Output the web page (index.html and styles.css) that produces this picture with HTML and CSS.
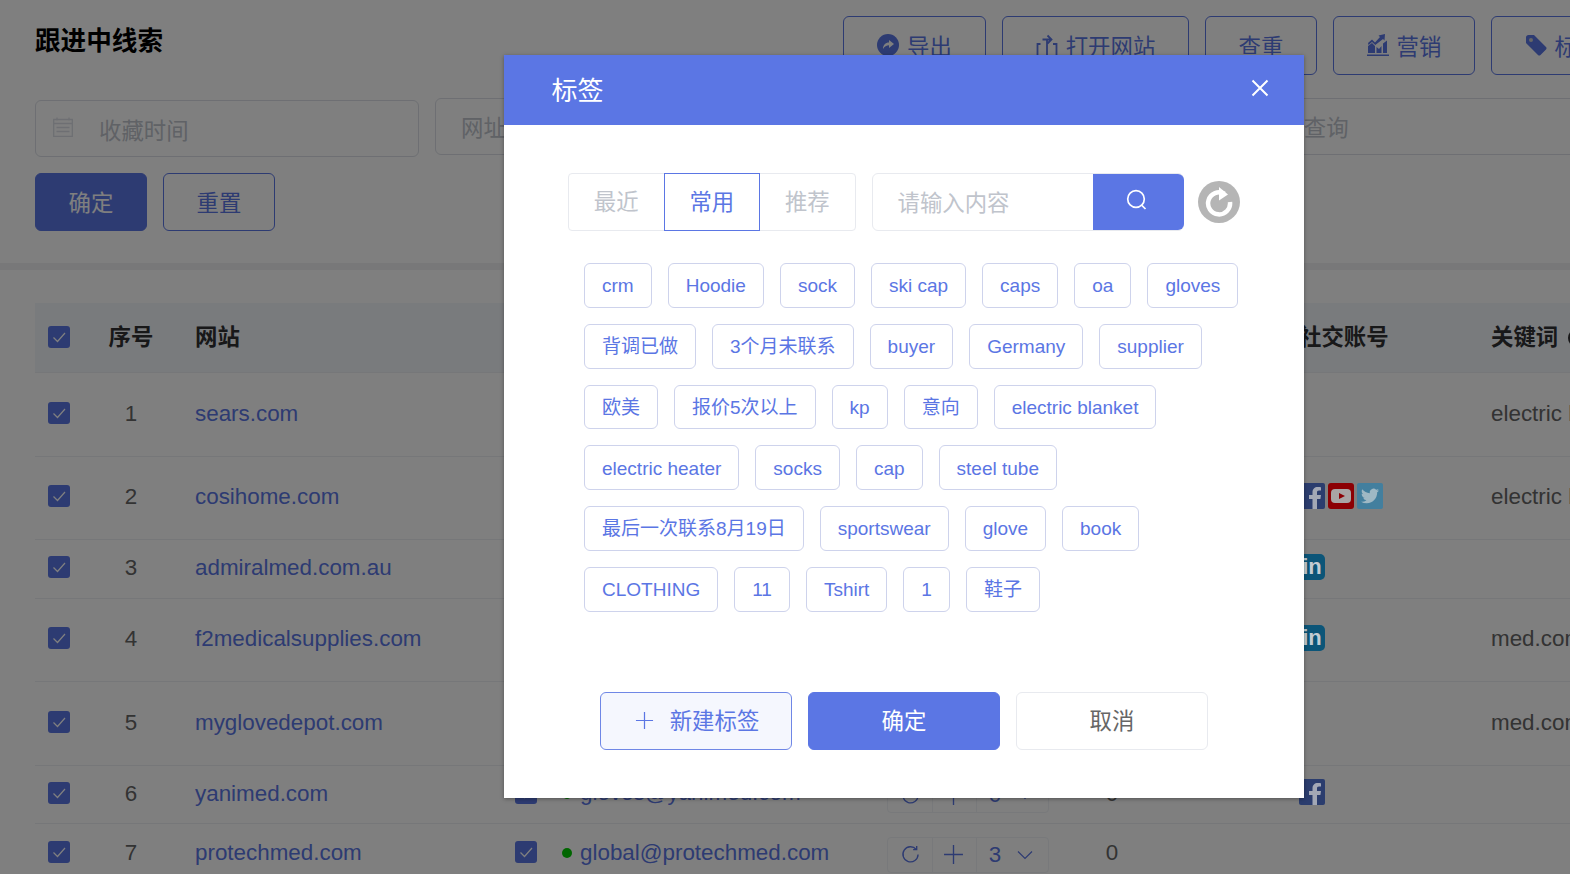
FILE: index.html
```html
<!DOCTYPE html>
<html lang="zh-CN">
<head>
<meta charset="utf-8">
<title>跟进中线索</title>
<link rel="stylesheet" href="styles.css">
</head>
<body>
<svg class="sprite" width="0" height="0" aria-hidden="true">
  <symbol id="i-check" viewBox="0 0 22 22"><path d="M5.500 11.500l4 4 7.500-8.500" fill="none" stroke="#fff" stroke-width="1.200"/></symbol>
  <symbol id="i-fb" viewBox="0 0 26 26"><rect width="26" height="26" rx="2" fill="#2b3d6e"/><path d="M18 26V16h3.400l.6-4h-4V9.600c0-1.200.4-2 2-2H22V4.200c-.4 0-1.700-.2-3.200-.2-3.200 0-5.300 1.900-5.300 5.400V12H10v4h3.500v10z" fill="#a3a8b5"/></symbol>
  <symbol id="i-yt" viewBox="0 0 26 26"><rect width="26" height="26" rx="3" fill="#8c0004"/><rect x="3" y="6" width="20" height="14" rx="4" fill="#a9a5a5"/><path d="M11 10l6 3-6 3z" fill="#8c0004"/></symbol>
  <symbol id="i-tw" viewBox="0 0 26 26"><rect width="26" height="26" rx="2" fill="#437f9e"/><path transform="translate(4 4) scale(.75)" d="M23.950 4.570a10 10 0 0 1-2.820.770 4.960 4.960 0 0 0 2.160-2.720c-.950.550-2 .960-3.120 1.190a4.920 4.920 0 0 0-8.380 4.480C7.690 8.100 4.070 6.130 1.640 3.160a4.820 4.820 0 0 0-.670 2.480c0 1.710.870 3.210 2.190 4.100a4.900 4.900 0 0 1-2.230-.620v.060a4.920 4.920 0 0 0 3.950 4.830 5 5 0 0 1-2.210.080 4.940 4.940 0 0 0 4.600 3.420A9.870 9.870 0 0 1 0 19.540a14 14 0 0 0 7.560 2.210c9.050 0 14-7.500 14-13.980 0-.210 0-.420-.020-.630a9.940 9.940 0 0 0 2.460-2.550z" fill="#9fb8c4"/></symbol>
  <symbol id="i-redo" viewBox="0 0 20 20"><path d="M15.500 5.200A7.200 7.200 0 1 0 17.200 10" fill="none" stroke="currentColor" stroke-width="1.300"/><path d="M12.500 5.400h3.400V2" fill="none" stroke="currentColor" stroke-width="1.300"/></symbol>
  <symbol id="i-plus" viewBox="0 0 20 20"><path d="M10 1v18M1 10h18" fill="none" stroke="currentColor" stroke-width="1.300"/></symbol>
  <symbol id="i-down" viewBox="0 0 16 10"><path d="M1 1.500l7 7 7-7" fill="none" stroke="currentColor" stroke-width="1.200"/></symbol>
</svg>

<div class="page">
  <header class="page-head">
    <h1 class="page-title">跟进中线索</h1>
    <div class="toolbar">
      <button class="tool-btn tb-export">
        <svg class="tool-icon" viewBox="0 0 22 22"><circle cx="11" cy="11" r="11" fill="#5b76e4"/><path d="M6 15c0-4 2.500-6.500 6-6.500V6l5 4-5 4v-2.700c-2.500 0-4.500 1.200-6 3.700z" fill="#fff"/></svg>
        <span>导出</span>
      </button>
      <button class="tool-btn tb-open">
        <svg class="tool-icon" viewBox="0 0 22 22"><path d="M1.500 21V10h3M17 10h3.500v11M11 21V5.500M6.500 5.500H15M11.500 1.500l4 4-4 4" fill="none" stroke="#5b76e4" stroke-width="1.800"/></svg>
        <span>打开网站</span>
      </button>
      <button class="tool-btn tb-dedupe"><span>查重</span></button>
      <button class="tool-btn tb-market">
        <svg class="tool-icon" viewBox="0 0 22 22"><path d="M0 20.500h22v1.500H0zM1 19v-7l4-3 3 3v7zM9.500 19v-6l2.500 2 2.500-3v7zM16 19V9.500l4-3V19zM1 9l4-3.500 3 3 5-5.500-1.500-1.500L18 0l-.5 6.500L16 5 8.300 11 5 8l-3.500 3z" fill="#5b76e4"/></svg>
        <span>营销</span>
      </button>
      <button class="tool-btn tb-market">
        <svg class="tool-icon" viewBox="0 0 22 22"><path d="M1 3.500C1 2 2 1 3.500 1H9l12 12c.700.700.700 1.800 0 2.500L15.500 21c-.700.700-1.800.700-2.500 0L1 9z" fill="#5b76e4"/><circle cx="6" cy="6" r="2" fill="#ccc"/></svg>
        <span>标签</span>
      </button>
    </div>
  </header>

  <section class="filters">
    <div class="filter-row">
      <div class="field field-date">
        <svg class="field-icon" viewBox="0 0 20 20"><path d="M.7 2.500h18.600v16.800H.7zM.7 6.500h18.600M4 .5v3M16 .5v3M3.500 10.500h13M3.500 14.500h13" fill="none" stroke="#dcdfe6" stroke-width="1.300"/></svg>
        <span>收藏时间</span>
      </div>
      <div class="field"><span>网址</span></div>
      <div class="field"><span>联系方式</span></div>
      <div class="field"><span>邮箱查询</span></div>
    </div>
    <div class="filter-actions">
      <button class="act-btn act-primary">确定</button>
      <button class="act-btn act-ghost">重置</button>
    </div>
  </section>

  <div class="divider"></div>

  <section class="table-wrap">
    <table class="leads">
      <colgroup>
        <col class="c-check"><col class="c-num"><col class="c-site"><col class="c-mail"><col class="c-follow"><col class="c-count"><col class="c-gap"><col class="c-social"><col class="c-key">
      </colgroup>
      <thead>
        <tr>
          <th class="cell-check"><svg class="check"><use href="#i-check"/></svg></th>
          <th class="cell-num">序号</th>
          <th class="cell-site">网站</th>
          <th></th><th></th><th></th><th></th>
          <th class="cell-social">社交账号</th>
          <th class="cell-key">关键词<span class="help-dot"></span></th>
        </tr>
      </thead>
      <tbody>
        <tr class="row-tall">
          <td class="cell-check"><svg class="check"><use href="#i-check"/></svg></td>
          <td class="cell-num">1</td><td class="cell-site">sears.com</td>
          <td></td><td></td><td></td><td></td><td class="cell-social"></td>
          <td class="cell-key">electric blanket</td>
        </tr>
        <tr class="row-tall">
          <td class="cell-check"><svg class="check"><use href="#i-check"/></svg></td>
          <td class="cell-num">2</td><td class="cell-site">cosihome.com</td>
          <td></td><td></td><td></td><td></td>
          <td class="cell-social"><div class="socials"><svg class="social"><use href="#i-fb"/></svg><svg class="social"><use href="#i-yt"/></svg><svg class="social"><use href="#i-tw"/></svg></div></td>
          <td class="cell-key">electric blanket</td>
        </tr>
        <tr class="row-short">
          <td class="cell-check"><svg class="check"><use href="#i-check"/></svg></td>
          <td class="cell-num">3</td><td class="cell-site">admiralmed.com.au</td>
          <td></td><td></td><td></td><td></td>
          <td class="cell-social"><div class="socials"><span class="social social-in">in</span></div></td>
          <td class="cell-key"></td>
        </tr>
        <tr class="row-tall">
          <td class="cell-check"><svg class="check"><use href="#i-check"/></svg></td>
          <td class="cell-num">4</td><td class="cell-site">f2medicalsupplies.com</td>
          <td></td><td></td><td></td><td></td>
          <td class="cell-social"><div class="socials"><span class="social social-in">in</span></div></td>
          <td class="cell-key">med.com</td>
        </tr>
        <tr class="row-tall">
          <td class="cell-check"><svg class="check"><use href="#i-check"/></svg></td>
          <td class="cell-num">5</td><td class="cell-site">myglovedepot.com</td>
          <td></td><td></td><td></td><td></td><td class="cell-social"></td>
          <td class="cell-key">med.com</td>
        </tr>
        <tr class="row-short">
          <td class="cell-check"><svg class="check"><use href="#i-check"/></svg></td>
          <td class="cell-num">6</td><td class="cell-site">yanimed.com</td>
          <td class="cell-mail"><div class="mail"><svg class="check"><use href="#i-check"/></svg><i class="dot"></i><span class="mail-text">gloves@yanimed.com</span></div></td>
          <td class="cell-follow"><div class="follow"><span class="seg seg-a"><svg class="seg-icon"><use href="#i-redo"/></svg></span><span class="seg seg-b"><svg class="seg-icon"><use href="#i-plus"/></svg></span><span class="seg seg-c">0<svg class="seg-down"><use href="#i-down"/></svg></span></div></td>
          <td class="cell-num">0</td><td></td>
          <td class="cell-social"><div class="socials"><svg class="social"><use href="#i-fb"/></svg></div></td>
          <td class="cell-key"></td>
        </tr>
        <tr class="row-last">
          <td class="cell-check"><svg class="check"><use href="#i-check"/></svg></td>
          <td class="cell-num">7</td><td class="cell-site">protechmed.com</td>
          <td class="cell-mail"><div class="mail"><svg class="check"><use href="#i-check"/></svg><i class="dot"></i><span class="mail-text">global@protechmed.com</span></div></td>
          <td class="cell-follow"><div class="follow"><span class="seg seg-a"><svg class="seg-icon"><use href="#i-redo"/></svg></span><span class="seg seg-b"><svg class="seg-icon"><use href="#i-plus"/></svg></span><span class="seg seg-c">3<svg class="seg-down"><use href="#i-down"/></svg></span></div></td>
          <td class="cell-num">0</td><td></td><td class="cell-social"></td><td class="cell-key"></td>
        </tr>
      </tbody>
    </table>
  </section>

  <div class="mask"></div>

  <div class="modal" role="dialog" aria-label="标签">
    <div class="modal-head">
      <h2 class="modal-title">标签</h2>
      <svg class="modal-close" viewBox="0 0 18 18"><path d="M1.500 1.500l15 15M16.500 1.500l-15 15" fill="none" stroke="#fff" stroke-width="2"/></svg>
    </div>
    <div class="modal-body">
      <div class="tools">
        <div class="tabs">
          <span class="tab">最近</span>
          <span class="tab tab-active">常用</span>
          <span class="tab">推荐</span>
        </div>
        <div class="search">
          <span class="search-text">请输入内容</span>
          <span class="search-btn">
            <svg class="search-icon" viewBox="0 0 22 22"><circle cx="10" cy="10" r="8.300" fill="none" stroke="#fff" stroke-width="1.700"/><path d="M15.500 16l4 4" fill="none" stroke="#fff" stroke-width="1.700"/></svg>
          </span>
        </div>
        <span class="reload">
          <svg class="reload-icon" viewBox="0 0 30 30"><path d="M20.500 6.800A11 11 0 1 0 26 15" fill="none" stroke="#fff" stroke-width="4.500"/><path d="M15 0l9 7.500-9 6z" fill="#fff"/></svg>
        </span>
      </div>
      <div class="tag-list">
        <span class="tag">crm</span><span class="tag">Hoodie</span><span class="tag">sock</span><span class="tag">ski cap</span><span class="tag">caps</span><span class="tag">oa</span><span class="tag">gloves</span>
        <span class="tag">背调已做</span><span class="tag">3个月未联系</span><span class="tag">buyer</span><span class="tag">Germany</span><span class="tag">supplier</span>
        <span class="tag">欧美</span><span class="tag">报价5次以上</span><span class="tag">kp</span><span class="tag">意向</span><span class="tag">electric blanket</span>
        <span class="tag">electric heater</span><span class="tag">socks</span><span class="tag">cap</span><span class="tag">steel tube</span>
        <span class="tag">最后一次联系8月19日</span><span class="tag">sportswear</span><span class="tag">glove</span><span class="tag">book</span>
        <span class="tag">CLOTHING</span><span class="tag">11</span><span class="tag">Tshirt</span><span class="tag">1</span><span class="tag">鞋子</span>
      </div>
      <div class="modal-foot">
        <button class="foot-btn foot-new"><svg class="foot-plus"><use href="#i-plus"/></svg>新建标签</button>
        <button class="foot-btn foot-ok">确定</button>
        <button class="foot-btn foot-cancel">取消</button>
      </div>
    </div>
  </div>
</div>
</body>
</html>
```

FILE: styles.css
```css
* { box-sizing: border-box; }

html, body {
  margin: 0;
  padding: 0;
  background: #fff;
}

body {
  font-family: "Liberation Sans", "Noto Sans CJK SC", sans-serif;
  font-size: 22.4px;
  color: #666;
}

button {
  font: inherit;
  cursor: pointer;
}

.sprite {
  position: absolute;
}

.page {
  position: relative;
  width: 1570px;
  height: 874px;
  overflow: hidden;
  background: #fff;
}

/* ---------- page head ---------- */
.page-head {
  display: flex;
  align-items: flex-start;
  padding: 16px 0 0 35px;
}

.page-title {
  flex: 0 0 808px;
  margin: 1px 0 0;
  font-size: 25.6px;
  line-height: 48px;
  font-weight: 700;
  color: #000;
}

.toolbar {
  display: flex;
  flex-shrink: 0;
  gap: 16px;
}

.tool-btn {
  display: flex;
  align-items: center;
  justify-content: center;
  gap: 8px;
  height: 58.7px;
  padding: 0;
  border: 1px solid #5b76e4;
  border-radius: 6px;
  background: #fff;
  color: #5b76e4;
  white-space: nowrap;
  flex-shrink: 0;
}

.tb-export { width: 143px; }
.tb-open { width: 187px; }
.tb-dedupe { width: 112px; }
.tb-market { width: 142px; }

.tool-icon {
  width: 22px;
  height: 22px;
  flex-shrink: 0;
}

/* ---------- filters ---------- */
.filters {
  padding: 23.3px 0 32px 35px;
}

.filter-row {
  display: flex;
  align-items: flex-start;
  gap: 16px;
}

.field {
  display: flex;
  align-items: center;
  flex: 0 0 383px;
  height: 57px;
  padding: 0 25px;
  border: 1px solid #dcdfe6;
  border-radius: 6px;
  color: #c0c4cc;
}

.field-date {
  flex-basis: 384px;
  margin-top: 2px;
  padding: 1px 17px 0;
  gap: 26px;
}

.field-icon {
  width: 20px;
  height: 20px;
  margin-bottom: 4px;
  flex-shrink: 0;
}

.filter-actions {
  display: flex;
  gap: 16px;
  margin-top: 16px;
}

.act-btn {
  width: 112px;
  height: 58px;
  border: 1px solid #5b76e4;
  border-radius: 6px;
  padding: 0 0 2px;
}

.act-primary {
  background: #5b76e4;
  color: #fff;
}

.act-ghost {
  background: #fff;
  color: #5b76e4;
}

.divider {
  height: 7px;
  background: #f0f1f2;
}

/* ---------- table ---------- */
.table-wrap {
  padding: 33px 0 0 35px;
}

.leads {
  width: 1643px;
  table-layout: fixed;
  border-collapse: collapse;
}

.c-check { width: 61px; }
.c-num { width: 70px; }
.c-site { width: 337px; }
.c-mail { width: 369px; }
.c-follow { width: 192px; }
.c-count { width: 96px; }
.c-gap { width: 128px; }
.c-social { width: 190px; }
.c-key { width: 200px; }

.leads th {
  height: 70px;
  padding: 0 0 6px;
  background: #f3f6fa;
  border-bottom: 1px solid #eceef2;
  font-weight: 700;
  text-align: left;
  color: #303133;
  white-space: nowrap;
}

.leads td {
  padding: 0 0 2px;
  border-bottom: 1px solid #eceef2;
  white-space: nowrap;
  color: #666;
}

.row-tall { height: 83.5px; }
.row-short { height: 58.5px; }
.row-last { height: 60.5px; }

.leads td.cell-check { padding: 0 0 4px 13px; }
.leads th.cell-check { padding: 0 0 2px 13px; }
.leads .cell-num { text-align: center; }
.leads td.cell-site { color: #5b76e4; }
.leads .cell-site { padding-left: 29px; }
.leads .cell-social { padding-left: 11px; }
.leads td.cell-social { padding-bottom: 5px; }
.leads .cell-key { padding-left: 13px; }
.leads td.cell-mail { padding: 0 0 4px 12px; }
.leads td.cell-follow { padding: 1px 0 0 15px; }

.check {
  display: block;
  width: 22px;
  height: 22px;
  background: #5b76e4;
  border-radius: 3px;
}

.help-dot {
  display: inline-block;
  width: 18px;
  height: 18px;
  margin-left: 10px;
  border-radius: 50%;
  background: #303133;
  vertical-align: -2px;
}

.socials {
  position: relative;
  z-index: 11;
  display: flex;
  gap: 3px;
}

.social {
  display: block;
  width: 26px;
  height: 26px;
  flex-shrink: 0;
}

.social-in {
  border-radius: 5px;
  background: #0c5578;
  color: #c3ccd2;
  font-size: 22px;
  font-weight: 700;
  line-height: 26px;
  text-align: center;
}

.mail {
  display: flex;
  align-items: center;
  color: #5b76e4;
}

.mail-text {
  padding-top: 1px;
}

.dot {
  width: 10px;
  height: 10px;
  margin: 2px 8px 0 25px;
  border-radius: 50%;
  background: #00cc00;
}

.follow {
  display: flex;
  width: 162px;
  height: 36px;
  border: 1px solid #f0f2f6;
  border-radius: 4px;
  color: #5b76e4;
}

.seg {
  display: flex;
  align-items: center;
  justify-content: center;
}

.seg-a { width: 45px; border-right: 1px solid #f0f2f6; }
.seg-b { width: 44px; padding-right: 3px; border-right: 1px solid #f0f2f6; }
.seg-c { flex: 1; gap: 16px; padding-right: 3px; color: #5b76e4; }

.seg-icon {
  width: 21px;
  height: 21px;
}

.seg-down {
  width: 16px;
  height: 10px;
}

/* ---------- modal ---------- */
.mask {
  position: absolute;
  inset: 0;
  z-index: 10;
  background: rgba(0, 0, 0, .5);
}

.modal {
  position: absolute;
  left: 504px;
  top: 55px;
  z-index: 12;
  width: 800px;
  background: #fff;
  box-shadow: 0 1px 4px rgba(0, 0, 0, .35);
}

.modal-head {
  display: flex;
  align-items: center;
  justify-content: space-between;
  height: 70px;
  padding: 0 35px 4px 47.5px;
  background: #5b76e4;
}

.modal-title {
  margin: 0;
  font-size: 26px;
  font-weight: 400;
  color: #fff;
}

.modal-close {
  width: 18px;
  height: 18px;
}

.modal-body {
  padding: 48px 64px;
}

.tools {
  display: flex;
  align-items: center;
}

.tabs {
  display: flex;
  width: 288px;
  height: 58px;
  border: 1px solid #e8eaef;
  border-radius: 4px;
  margin-right: 16px;
}

.tab {
  display: flex;
  flex: 1;
  align-items: center;
  justify-content: center;
  margin: -1px 0;
  padding-bottom: 4px;
  color: #c0c4cc;
}

.tab-active {
  border: 1px solid #5b76e4;
  color: #5b76e4;
}

.search {
  display: flex;
  width: 313px;
  height: 58px;
  border: 1px solid #e8eaef;
  border-radius: 6px;
  margin-right: 14px;
}

.search-text {
  display: flex;
  align-items: center;
  flex: 1;
  padding: 0 0 2px 25px;
  color: #c0c4cc;
}

.search-btn {
  display: flex;
  align-items: center;
  justify-content: center;
  width: 91px;
  margin: 0 -1px 0 0;
  padding: 0 3px 4px 0;
  border-radius: 0 6px 6px 0;
  background: #5b76e4;
}

.search-icon {
  width: 22px;
  height: 22px;
}

.reload {
  display: flex;
  align-items: center;
  justify-content: center;
  width: 42px;
  height: 42px;
  border-radius: 50%;
  background: #b5b5b5;
}

.reload-icon {
  width: 30px;
  height: 30px;
}

.tag-list {
  display: flex;
  flex-wrap: wrap;
  gap: 16px;
  margin-top: 32px;
  padding-left: 16px;
}

.tag {
  display: flex;
  align-items: center;
  height: 44.8px;
  padding: 1.500px 17px 0;
  border: 1px solid #ced3ec;
  border-radius: 6px;
  font-size: 19px;
  line-height: 26px;
  color: #5b76e4;
  white-space: nowrap;
}

.modal-foot {
  display: flex;
  justify-content: center;
  gap: 16px;
  margin-top: 80px;
}

.foot-btn {
  display: flex;
  align-items: center;
  justify-content: center;
  width: 192px;
  height: 58px;
  border-radius: 6px;
  padding: 0 0 4px;
}

.foot-new {
  gap: 16px;
  padding-left: 2px;
  border: 1px solid #6f87e6;
  background: #f5f7fe;
  color: #5b76e4;
}

.foot-plus {
  width: 19px;
  height: 19px;
  margin-top: 3px;
}

.foot-ok {
  border: 1px solid #5b76e4;
  background: #5b76e4;
  color: #fff;
}

.foot-cancel {
  border: 1px solid #e8eaef;
  background: #fff;
  color: #666;
}
```
